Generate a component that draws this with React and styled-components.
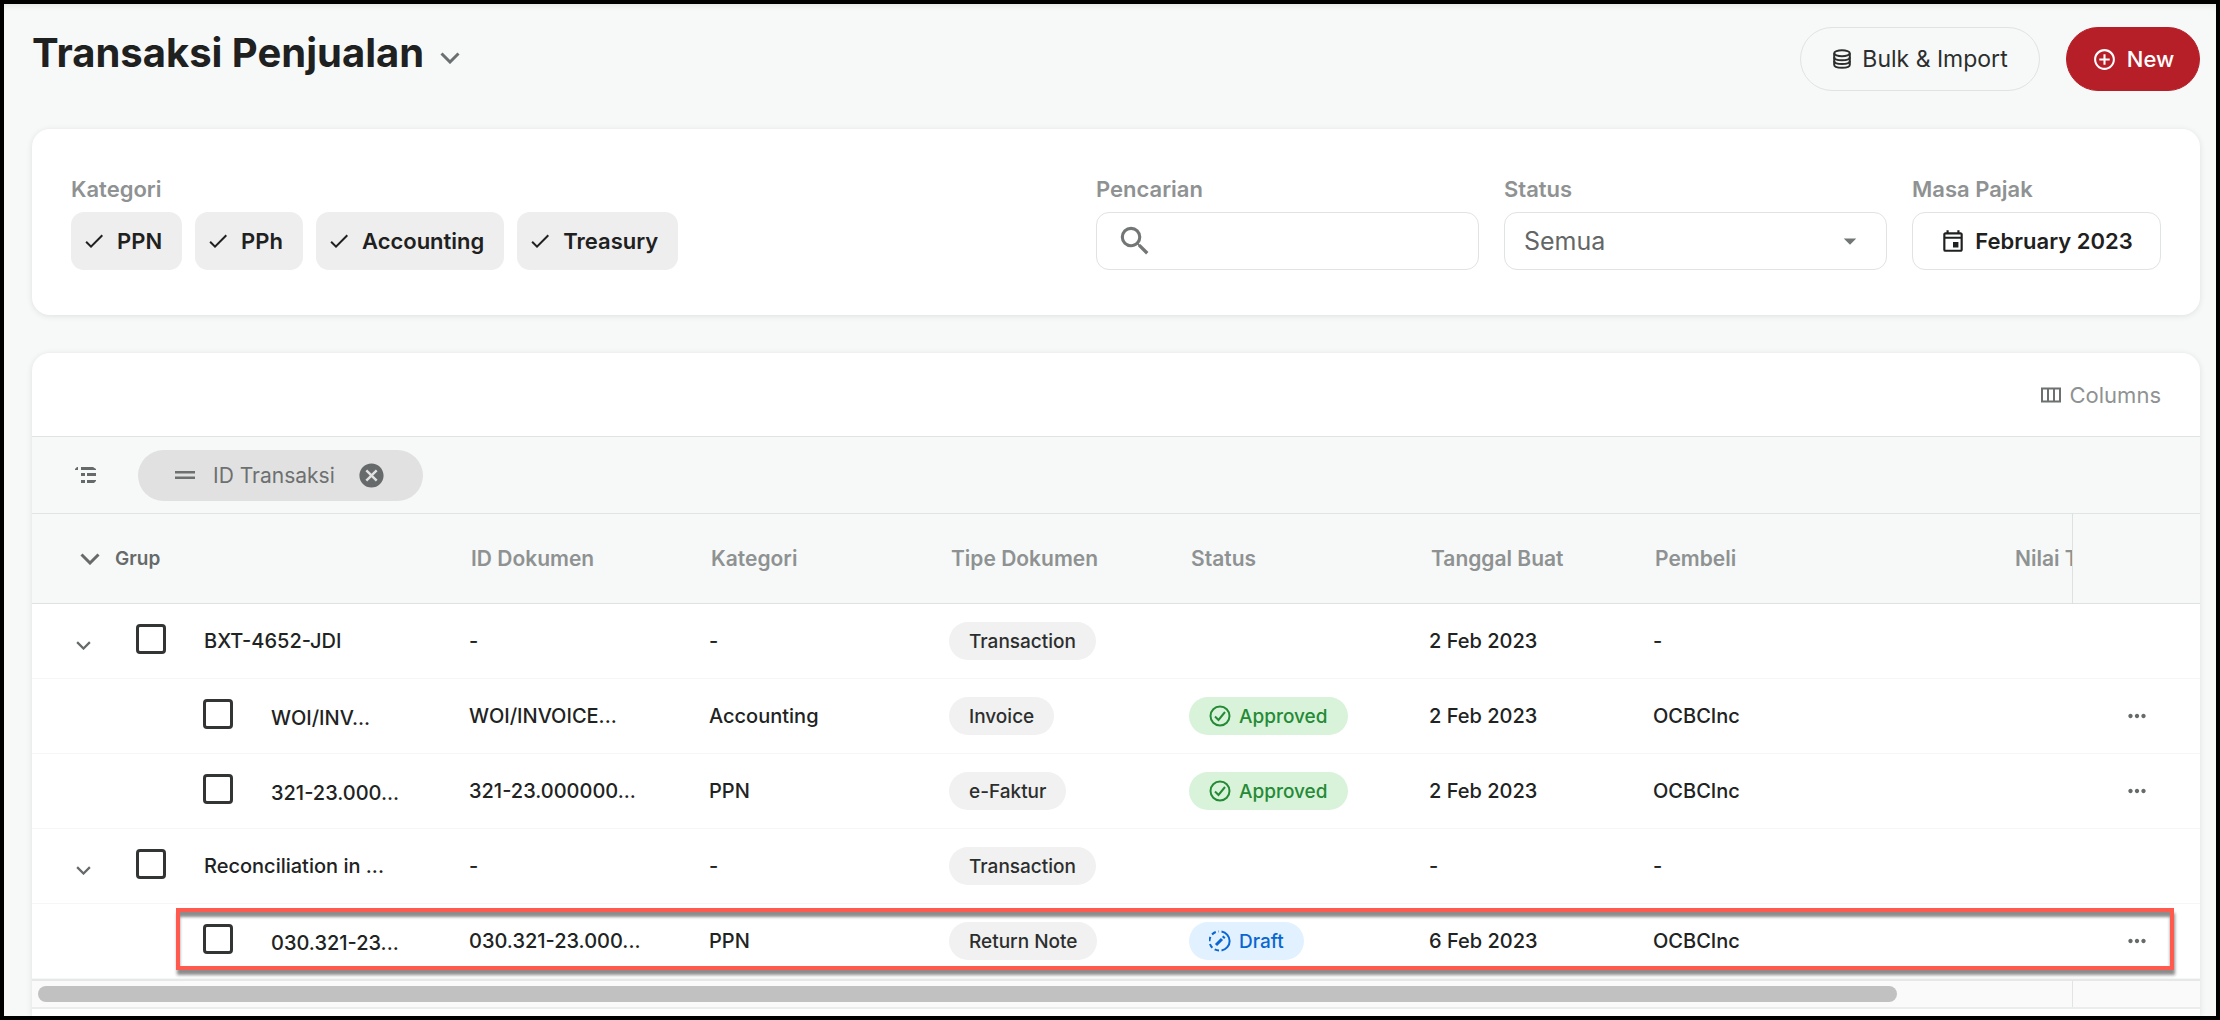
import React from "react";
import styled, { createGlobalStyle } from "styled-components";
import {
    MdAddCircleOutline,
    MdArrowDropDown,
    MdCancel,
    MdCheck,
    MdMoreHoriz,
    MdOutlineEvent,
    MdSearch
} from "react-icons/md";

const GlobalStyle = createGlobalStyle`
    * {
        box-sizing: border-box;
    }
    body {
        margin: 0;
        background: #f7f9f9;
    }
    body, button, input, select {
        font-family: Inter, "Open Sans", sans-serif;
    }
    button {
        cursor: pointer;
    }
`;

const Page = styled.div`
    min-height: 100vh;
    display: flex;
    flex-direction: column;
    border: 4px solid #000;
    padding: 23px 16px 0 28px;
    background: #f7f9f9;
    color: #212323;
    box-shadow: inset 0 6px 6px -4px rgba(0, 0, 0, 0.08);
`;

const Header = styled.header`
    display: flex;
    align-items: center;
    justify-content: space-between;
    height: 64px;
    margin-bottom: 38px;
`;

const TitleButton = styled.button`
    display: flex;
    align-items: center;
    gap: 16px;
    padding: 0;
    margin-bottom: 12px;
    border: 0;
    background: none;
    color: #6b6f6f;

    svg {
        margin-top: 10px;
    }
`;

const Title = styled.h1`
    margin: 0;
    font-size: 40px;
    line-height: 48px;
    font-weight: 700;
    color: #1f2121;
`;

const Actions = styled.div`
    display: flex;
    gap: 26px;
`;

const Action = styled.button`
    display: flex;
    align-items: center;
    justify-content: center;
    gap: 10px;
    width: ${props => (props.$primary ? "134px" : "240px")};
    height: 64px;
    border-radius: 32px;
    border: 1px solid ${props => (props.$primary ? "#b71f28" : "#e1e3e3")};
    background: ${props => (props.$primary ? "#b71f28" : "transparent")};
    color: ${props => (props.$primary ? "#fff" : "#2c2e2e")};
    font-size: ${props => (props.$primary ? "22px" : "23px")};
    font-weight: ${props => (props.$primary ? 500 : 400)};
`;

const Card = styled.section`
    background: #fff;
    border-radius: 18px;
    box-shadow: 0 1px 6px rgba(0, 0, 0, 0.1);
`;

const Filters = styled(Card)`
    display: flex;
    align-items: flex-start;
    gap: 25px;
    height: 186px;
    padding: 46px 39px 0;
    margin-bottom: 38px;
`;

const Field = styled.div`
    display: flex;
    flex-direction: column;
    gap: 9px;
    width: ${props => props.$width || "auto"};
    margin-right: ${props => (props.$push ? "auto" : "0")};
`;

const Label = styled.label`
    font-size: 22px;
    line-height: 28px;
    font-weight: 600;
    color: #8f9292;
`;

const Chips = styled.div`
    display: flex;
    gap: 13px;
`;

const Chip = styled.button`
    display: flex;
    align-items: center;
    gap: 11px;
    height: 58px;
    padding: 0 20px 0 11px;
    border: 0;
    border-radius: 13px;
    background: #eee;
    color: #1f2121;
    font-size: 22px;
    font-weight: 600;
`;

const Box = styled.div`
    display: flex;
    align-items: center;
    height: 58px;
    padding: 0 21px 0 19px;
    border: 1px solid #e1e2e2;
    border-radius: 13px;
    background: #fff;
    color: #737676;
`;

const SearchInput = styled.input`
    flex: 1;
    min-width: 0;
    border: 0;
    outline: 0;
    background: none;
    font-size: 25px;
`;

const Select = styled.select`
    flex: 1;
    padding: 0;
    appearance: none;
    border: 0;
    outline: 0;
    background: none;
    color: #636666;
    font-size: 25px;
`;

const PeriodButton = styled.button`
    display: flex;
    align-items: center;
    justify-content: center;
    gap: 9px;
    width: 249px;
    height: 58px;
    border: 1px solid #e1e2e2;
    border-radius: 13px;
    background: #fff;
    color: #1f2121;
    font-size: 22px;
    font-weight: 600;
    white-space: nowrap;
`;

const TableCard = styled(Card)`
    flex: 1;
    border-radius: 18px 18px 0 0;
    overflow: hidden;
`;

const Toolbar = styled.div`
    display: flex;
    align-items: center;
    justify-content: flex-end;
    height: 83px;
    padding: 0 39px;
`;

const ColumnsButton = styled.button`
    display: flex;
    align-items: center;
    gap: 9px;
    padding: 0;
    border: 0;
    background: none;
    color: #8f9292;
    font-size: 22px;
`;

const GroupBar = styled.div`
    display: flex;
    align-items: center;
    gap: 41px;
    height: 77px;
    padding-left: 43px;
    border-top: 1px solid #e0e3e6;
    background: #f7f9f9;
    color: #666a6a;
`;

const GroupChip = styled.div`
    display: flex;
    align-items: center;
    height: 51px;
    padding: 0 37px;
    border-radius: 26px;
    background: #e1e1e1;
    color: #6d7070;
    font-size: 21px;
`;

const ChipText = styled.span`
    margin: 0 22px 0 18px;
`;

const IconButton = styled.button`
    display: flex;
    padding: 0;
    border: 0;
    background: none;
    color: #666a6a;
`;

const Table = styled.table`
    width: 100%;
    table-layout: fixed;
    border-collapse: separate;
    border-spacing: 0;
`;

const Th = styled.th`
    height: 91px;
    padding: 0 0 0 ${props => props.$indent || 20}px;
    border-top: 1px solid #e1e4e4;
    border-bottom: 1px solid #dde1e1;
    border-left: ${props => (props.$pinned ? "1px solid #dde1e1" : "0")};
    background: #f7f9f9;
    color: #8f9292;
    font-size: 21px;
    font-weight: 600;
    text-align: left;
    white-space: nowrap;
    overflow: hidden;
`;

const GroupHead = styled.div`
    display: flex;
    align-items: center;
    gap: 15px;
    color: #666a6a;
    font-size: 19px;
`;

const Row = styled.tr`
    position: relative;
`;

// outline drawn over the whole row
const Marker = styled.div`
    position: absolute;
    inset: 4px 26px 9px 144px;
    border: 4px solid #ff5a4d;
    box-shadow: 1px 5px 3px rgba(0, 0, 0, 0.45), inset 0 5px 3px rgba(0, 0, 0, 0.45);
    pointer-events: none;
`;

const Td = styled.td`
    height: 75px;
    padding: 0 0 0 ${props => props.$indent || 18}px;
    border-bottom: 1px solid #f5f6f6;
    font-size: 20px;
    font-weight: 500;
    white-space: nowrap;
    overflow: hidden;
    text-overflow: ellipsis;
`;

const GroupCell = styled.div`
    display: flex;
    align-items: center;
    padding-left: ${props => (props.$child ? "153px" : "26px")};
`;

const Toggle = styled(IconButton)`
    width: 60px;
    padding-top: 8px;
`;

const Checkbox = styled.input`
    appearance: none;
    width: 30px;
    height: 30px;
    margin: 0 38px 4px 0;
    border: 3px solid #333535;
    border-radius: 4px;
    background: #fff;
`;

const GroupName = styled.label`
    padding-top: ${props => (props.$child ? "4px" : "0")};
`;

const Badge = styled.span`
    display: inline-flex;
    align-items: center;
    gap: 8px;
    height: 38px;
    padding: 0 20px;
    border-radius: 19px;
    background: ${props => props.$bg || "#f1f1f1"};
    color: ${props => props.$color || "#2c2e2e"};
    font-size: 19px;
    vertical-align: middle;
`;

const ScrollTrack = styled.div`
    display: flex;
    height: 30px;
    border-top: 2px solid #e6e7e7;
    border-bottom: 2px solid #ebecec;
    background: #fafafa;
`;

const ScrollArea = styled.div`
    flex: 1;
    padding: 5px 6px;
    border-right: 1px solid #e1e4e4;
`;

const Thumb = styled.div`
    width: calc(100% * 11 / 12);
    height: 16px;
    border-radius: 8px;
    background: #c1c1c1;
`;

const ScrollEnd = styled.div`
    width: 127px;
`;

const ChevronIcon = ({ width, stroke }) => (
    <svg width={width} height={width * 0.6} viewBox="0 0 20 12" fill="none" stroke="currentColor" strokeWidth={stroke}>
        <path d="M1.5 1.5 10 10l8.500-8.500" />
    </svg>
);

const DatabaseIcon = () => (
    <svg width="20" height="20" viewBox="0 0 20 20" fill="none" stroke="currentColor" strokeWidth="2">
        <ellipse cx="10" cy="4.200" rx="7.800" ry="3" />
        <path d="M2.200 4.200v11.600c0 1.800 3.500 3 7.800 3s7.800-1.200 7.800-3v-11.600" />
        <path d="M2.200 8.200c0 1.800 3.500 3 7.800 3s7.800-1.200 7.800-3M2.200 12c0 1.800 3.500 3 7.800 3s7.800-1.200 7.800-3" />
    </svg>
);

const ColumnsIcon = () => (
    <svg width="20" height="16" viewBox="0 0 20 16" fill="none" stroke="#6d7070" strokeWidth="2">
        <path d="M1 1.500h18v13H1zM7 1v14M13 1v14" />
    </svg>
);

const TreeIcon = () => (
    <svg width="22" height="18" viewBox="0 0 22 18" fill="currentColor">
        <path d="M0 4V3l2-2h1v3zM6 1h12l3 2v1H6zM6 7h4v3H6zM12 7h9v3h-9zM6 14h4v3H6zM12 14h9v1l-2 2h-7z" />
    </svg>
);

const DragIcon = () => (
    <svg width="20" height="8" viewBox="0 0 20 8" fill="currentColor">
        <path d="M0 0h20v2.500H0zM0 5.500h20V8H0z" />
    </svg>
);

const ApprovedIcon = () => (
    <svg width="22" height="22" viewBox="0 0 22 22" fill="none" stroke="currentColor" strokeWidth="2">
        <circle cx="11" cy="11" r="9.500" />
        <path d="m6 11.500 3.500 3.500 6.500-8" />
    </svg>
);

const DraftIcon = () => (
    <svg width="22" height="22" viewBox="0 0 22 22" fill="none" stroke="currentColor" strokeWidth="2">
        <path d="M12.500 1.600a9.500 9.500 0 0 1 0 18.800" />
        <path d="M10 20.500a9.500 9.500 0 0 1 0-19" strokeDasharray="4.500 2.800" />
        <path d="m7 15 6-6M14 8l1.500-1.500" strokeWidth="3" />
    </svg>
);

const categories = ["PPN", "PPh", "Accounting", "Treasury"];

const rows = [
    { id: "1", name: "BXT-4652-JDI", doc: "-", category: "-", type: "Transaction", date: "2 Feb 2023", buyer: "-" },
    { id: "2", child: true, name: "WOI/INV...", doc: "WOI/INVOICE...", category: "Accounting", type: "Invoice", status: "Approved", date: "2 Feb 2023", buyer: "OCBCInc" },
    { id: "3", child: true, name: "321-23.000...", doc: "321-23.000000...", category: "PPN", type: "e-Faktur", status: "Approved", date: "2 Feb 2023", buyer: "OCBCInc" },
    { id: "4", name: "Reconciliation in ...", doc: "-", category: "-", type: "Transaction", date: "-", buyer: "-" },
    { id: "5", child: true, marked: true, name: "030.321-23...", doc: "030.321-23.000...", category: "PPN", type: "Return Note", status: "Draft", date: "6 Feb 2023", buyer: "OCBCInc" }
];

const StatusBadge = ({ status }) =>
    status === "Approved" ? (
        <Badge $bg="#d8f3da" $color="#258a35"><ApprovedIcon />{status}</Badge>
    ) : (
        <Badge $bg="#e2f1ff" $color="#0a66d0"><DraftIcon />{status}</Badge>
    );

const TransactionRow = ({ row }) => (
    <Row>
        <Td>
            <GroupCell $child={row.child}>
                {!row.child && (
                    <Toggle aria-label="Collapse group"><ChevronIcon width={15} stroke={3} /></Toggle>
                )}
                <Checkbox type="checkbox" id={`row-${row.id}`} />
                <GroupName htmlFor={`row-${row.id}`} $child={row.child}>{row.name}</GroupName>
            </GroupCell>
        </Td>
        <Td>{row.doc}</Td>
        <Td>{row.category}</Td>
        <Td><Badge>{row.type}</Badge></Td>
        <Td>{row.status && <StatusBadge status={row.status} />}</Td>
        <Td>{row.date}</Td>
        <Td>{row.buyer}</Td>
        <Td />
        <Td $indent={52}>
            {row.child && (
                <IconButton aria-label="More actions"><MdMoreHoriz size={26} /></IconButton>
            )}
            {row.marked && <Marker />}
        </Td>
    </Row>
);

const App = () => (
    <>
        <GlobalStyle />
        <Page>
            <Header>
                <TitleButton>
                    <Title>Transaksi Penjualan</Title>
                    <ChevronIcon width={20} stroke={3} />
                </TitleButton>
                <Actions>
                    <Action><DatabaseIcon />Bulk &amp; Import</Action>
                    <Action $primary><MdAddCircleOutline size={25} />New</Action>
                </Actions>
            </Header>
            <Filters>
                <Field $push>
                    <Label as="span">Kategori</Label>
                    <Chips>
                        {categories.map(name => (
                            <Chip key={name}><MdCheck size={24} />{name}</Chip>
                        ))}
                    </Chips>
                </Field>
                <Field $width="383px">
                    <Label htmlFor="search">Pencarian</Label>
                    <Box>
                        <MdSearch size={38} />
                        <SearchInput id="search" type="text" />
                    </Box>
                </Field>
                <Field $width="383px">
                    <Label htmlFor="status">Status</Label>
                    <Box>
                        <Select id="status" defaultValue="Semua">
                            <option>Semua</option>
                        </Select>
                        <MdArrowDropDown size={30} />
                    </Box>
                </Field>
                <Field>
                    <Label htmlFor="period">Masa Pajak</Label>
                    <PeriodButton id="period"><MdOutlineEvent size={26} />February 2023</PeriodButton>
                </Field>
            </Filters>
            <TableCard>
                <Toolbar>
                    <ColumnsButton><ColumnsIcon />Columns</ColumnsButton>
                </Toolbar>
                <GroupBar>
                    <TreeIcon />
                    <GroupChip>
                        <DragIcon />
                        <ChipText>ID Transaksi</ChipText>
                        <IconButton aria-label="Remove group"><MdCancel size={29} /></IconButton>
                    </GroupChip>
                </GroupBar>
                <Table>
                    <colgroup>
                        <col style={{ width: 419 }} />
                        <col style={{ width: 240 }} />
                        <col style={{ width: 240 }} />
                        <col style={{ width: 240 }} />
                        <col style={{ width: 240 }} />
                        <col style={{ width: 224 }} />
                        <col />
                        <col style={{ width: 118 }} />
                        <col style={{ width: 128 }} />
                    </colgroup>
                    <thead>
                        <tr>
                            <Th $indent={48}><GroupHead><ChevronIcon width={20} stroke={3} />Grup</GroupHead></Th>
                            <Th>ID Dokumen</Th>
                            <Th>Kategori</Th>
                            <Th>Tipe Dokumen</Th>
                            <Th>Status</Th>
                            <Th>Tanggal Buat</Th>
                            <Th>Pembeli</Th>
                            <Th $indent={61}>Nilai Transaksi</Th>
                            <Th $pinned aria-label="Actions" />
                        </tr>
                    </thead>
                    <tbody>
                        {rows.map(row => <TransactionRow key={row.id} row={row} />)}
                    </tbody>
                </Table>
                <ScrollTrack>
                    <ScrollArea><Thumb /></ScrollArea>
                    <ScrollEnd />
                </ScrollTrack>
            </TableCard>
        </Page>
    </>
);

export default App;
